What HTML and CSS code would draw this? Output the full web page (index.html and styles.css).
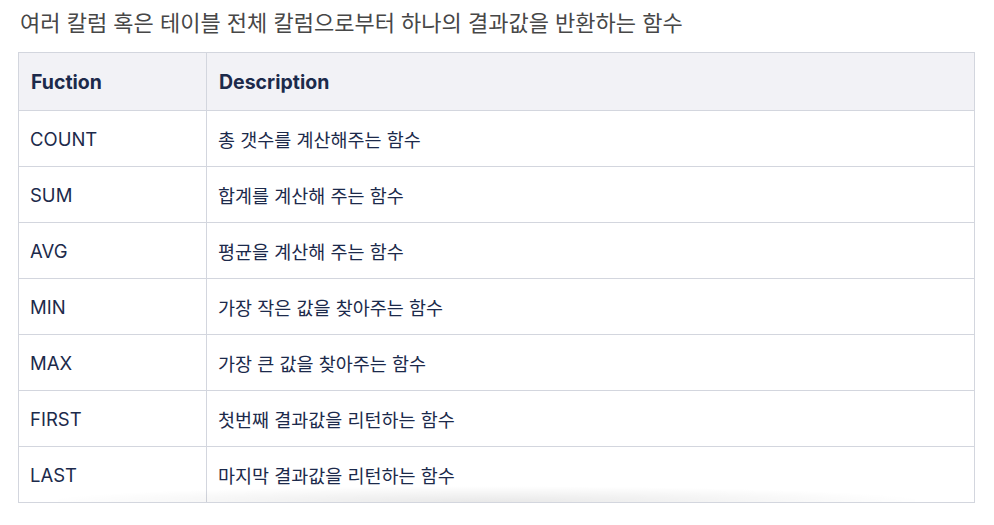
FILE: index.html
```html
<!DOCTYPE html>
<html lang="ko">
<head>
<meta charset="utf-8">
<link rel="stylesheet" href="styles.css">
</head>
<body>
<div class="page">
  <p class="lead">여러 칼럼 혹은 테이블 전체 칼럼으로부터 하나의 결과값을 반환하는 함수</p>
  <div class="table-wrap">
    <table class="fn-table">
      <colgroup><col class="col-fn"><col class="col-desc"></colgroup>
      <thead>
        <tr><th>Fuction</th><th>Description</th></tr>
      </thead>
      <tbody>
        <tr><td class="fn">COUNT</td><td class="desc">총 갯수를 계산해주는 함수</td></tr>
        <tr><td class="fn">SUM</td><td class="desc">합계를 계산해 주는 함수</td></tr>
        <tr><td class="fn">AVG</td><td class="desc">평균을 계산해 주는 함수</td></tr>
        <tr><td class="fn">MIN</td><td class="desc">가장 작은 값을 찾아주는 함수</td></tr>
        <tr><td class="fn">MAX</td><td class="desc">가장 큰 값을 찾아주는 함수</td></tr>
        <tr><td class="fn">FIRST</td><td class="desc">첫번째 결과값을 리턴하는 함수</td></tr>
        <tr><td class="fn">LAST</td><td class="desc">마지막 결과값을 리턴하는 함수</td></tr>
      </tbody>
    </table>
    <div class="scroll-shade"></div>
  </div>
</div>
</body>
</html>
```

FILE: styles.css
```css
html, body {
  margin: 0;
  padding: 0;
  background: #ffffff;
}

.page {
  padding: 0 19px 0 18px;
  font-family: Inter, "Noto Sans CJK KR", sans-serif;
}

.lead {
  margin: 0;
  padding: 6px 0 0 2px;
  height: 52px;
  box-sizing: border-box;
  font-family: "Noto Sans CJK KR", sans-serif;
  font-size: 22px;
  line-height: 30px;
  color: #474747;
}

.table-wrap {
  position: relative;
}

.fn-table {
  width: 100%;
  table-layout: fixed;
  border-collapse: collapse;
  border: 1px solid #d3d6de;
  color: #1c2a4b;
}

.col-fn {
  width: 188px;
}

.fn-table th,
.fn-table td {
  border: 1px solid #d3d6de;
  padding: 0 11px;
  text-align: left;
  vertical-align: middle;
}

.fn-table th {
  height: 58px;
  box-sizing: border-box;
  background: #f2f2f6;
  font-weight: 700;
  font-size: 19.5px;
  padding-left: 12px;
}

.fn-table td {
  height: 55px;
  background: #ffffff;
}

.fn {
  font-size: 18.5px;
}

.desc {
  font-family: "Noto Sans CJK KR", sans-serif;
  font-size: 18.5px;
  padding-bottom: 2px;
}

.scroll-shade {
  position: absolute;
  left: 40px;
  right: 60px;
  bottom: 1px;
  height: 16px;
  pointer-events: none;
  background: radial-gradient(ellipse 52% 100% at 50% 100%, rgba(0, 0, 0, 0.09), rgba(0, 0, 0, 0));
}
```
